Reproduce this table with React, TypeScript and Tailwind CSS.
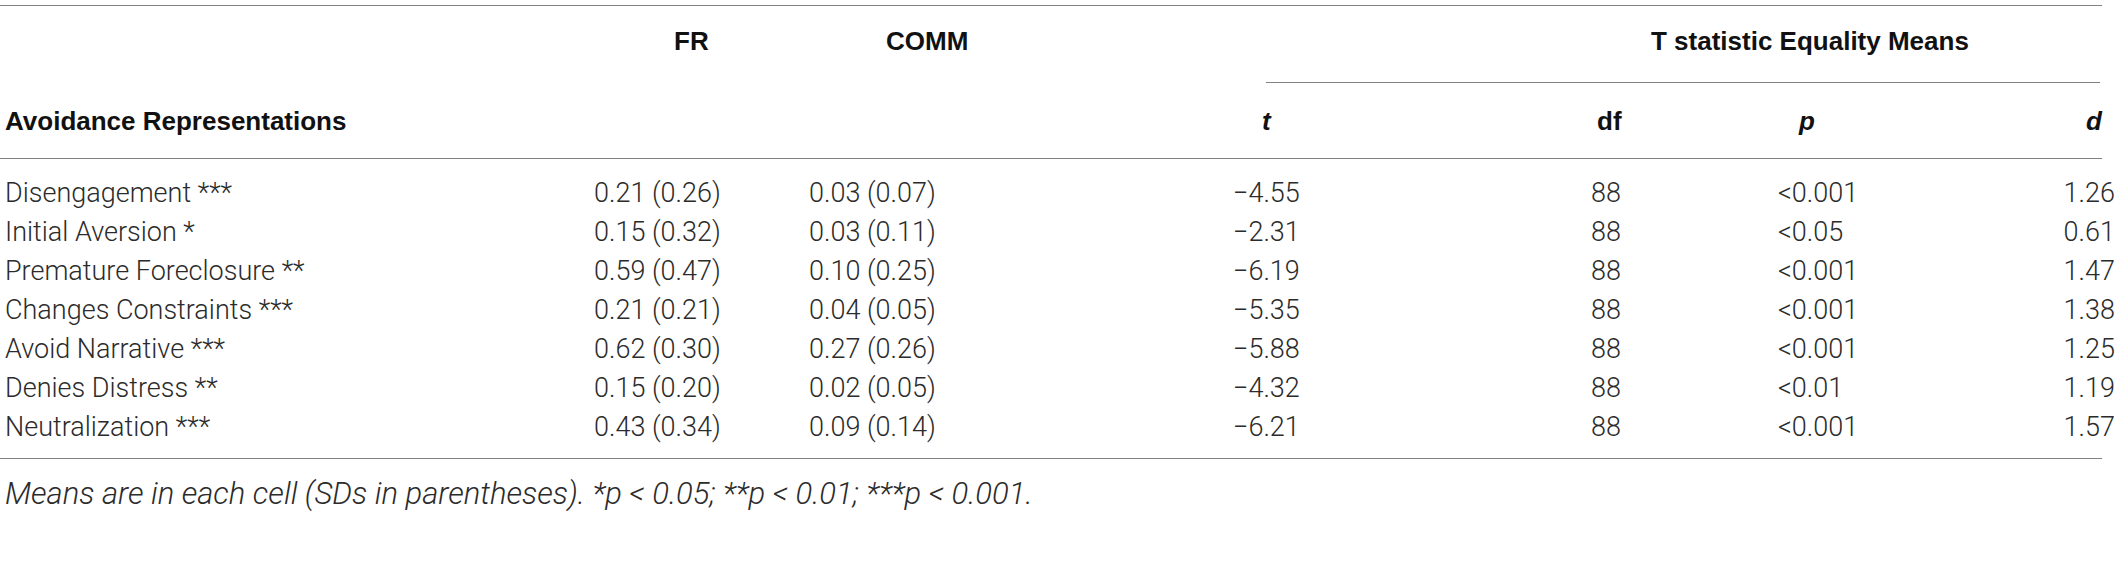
const rows: string[][] = [
  ['Disengagement ***', '0.21 (0.26)', '0.03 (0.07)', '\u22124.55', '88', '<0.001', '1.26'],
  ['Initial Aversion *', '0.15 (0.32)', '0.03 (0.11)', '\u22122.31', '88', '<0.05', '0.61'],
  ['Premature Foreclosure **', '0.59 (0.47)', '0.10 (0.25)', '\u22126.19', '88', '<0.001', '1.47'],
  ['Changes Constraints ***', '0.21 (0.21)', '0.04 (0.05)', '\u22125.35', '88', '<0.001', '1.38'],
  ['Avoid Narrative ***', '0.62 (0.30)', '0.27 (0.26)', '\u22125.88', '88', '<0.001', '1.25'],
  ['Denies Distress **', '0.15 (0.20)', '0.02 (0.05)', '\u22124.32', '88', '<0.01', '1.19'],
  ['Neutralization ***', '0.43 (0.34)', '0.09 (0.14)', '\u22126.21', '88', '<0.001', '1.57'],
]

const cols = 'grid grid-cols-[594px_215px_424px_358px_187px_222px_1fr]'

export default function App() {
  return (
    <div className="w-[2118px] h-[562px] bg-white text-[#2b2b2b] font-['Liberation_Sans',Arial,sans-serif]">
      <div className="pt-[5px]">
        <div className="h-px w-[2102px] bg-[#808080]" />

        {/* header row 1 */}
        <div className={`${cols} h-[77px] text-[26px] font-bold text-[#111]`}>
          <div />
          <div className="flex items-center pl-[80px] pb-[6px]">FR</div>
          <div className="flex items-center pl-[77px] pb-[6px]">COMM</div>
          <div className="col-span-4 flex flex-col">
            <div className="flex-1 flex items-center pl-[418px] pb-[6px]">T statistic Equality Means</div>
            <div className="h-px ml-[33px] mr-[18px] bg-[#808080]" />
          </div>
        </div>

        {/* header row 2 */}
        <div className={`${cols} h-[75px] text-[26px] font-bold text-[#111]`}>
          <div className="flex items-center pl-[5px] pt-[2px]">Avoidance Representations</div>
          <div />
          <div />
          <div className="flex items-center pl-[29px] pt-[2px] italic">t</div>
          <div className="flex items-center pl-[6px] pt-[2px]">df</div>
          <div className="flex items-center pl-[21px] pt-[2px] italic">p</div>
          <div className="flex items-center justify-end pr-[16px] pt-[2px] italic">d</div>
        </div>
        <div className="h-px w-[2102px] bg-[#808080]" />

        {/* body */}
        <div className="pt-[14px] pb-[12px] text-[27px] font-['Roboto',Arial,sans-serif] font-light">
          {rows.map((r) => (
            <div key={r[0]} className={`${cols} h-[39px] items-center`}>
              <div className="pl-[5px]">{r[0]}</div>
              <div>{r[1]}</div>
              <div>{r[2]}</div>
              <div>{r[3]}</div>
              <div>{r[4]}</div>
              <div>{r[5]}</div>
              <div className="text-right pr-[3px]">{r[6]}</div>
            </div>
          ))}
        </div>
        <div className="h-px w-[2102px] bg-[#808080]" />

        <p className="pl-[5px] pt-[12px] text-[31px] italic font-['Roboto',Arial,sans-serif] font-light">
          Means are in each cell (SDs in parentheses). *p &lt; 0.05; **p &lt; 0.01; ***p &lt; 0.001.
        </p>
      </div>
    </div>
  )
}
